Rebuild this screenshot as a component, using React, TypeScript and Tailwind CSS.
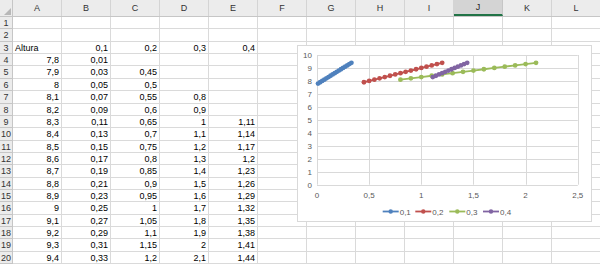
import React from 'react';

const COLS = ['A', 'B', 'C', 'D', 'E', 'F', 'G', 'H', 'I', 'J', 'K', 'L'];

const fmt = (n: number) => String(Math.round(n * 100) / 100).replace('.', ',');

// columns A..E of the sheet, keyed by first row and step
function buildRows(): string[][] {
  const rows: string[][] = [];
  for (let r = 1; r <= 20; r++) {
    const cells = COLS.map(() => '');
    if (r === 3) {
      cells[0] = 'Altura';
      cells[1] = '0,1';
      cells[2] = '0,2';
      cells[3] = '0,3';
      cells[4] = '0,4';
    }
    if (r >= 4) {
      cells[0] = fmt(7.8 + (r - 4) * 0.1);
      cells[1] = fmt(0.01 + (r - 4) * 0.02);
    }
    if (r >= 5) cells[2] = fmt(0.45 + (r - 5) * 0.05);
    if (r >= 7) cells[3] = fmt(0.8 + (r - 7) * 0.1);
    if (r >= 9) cells[4] = fmt(1.11 + (r - 9) * 0.03);
    rows.push(cells);
  }
  return rows;
}

const series = [
  { name: '0,1', color: '#4f81bd', x0: 0.01, dx: 0.02, y0: 7.8, n: 17 },
  { name: '0,2', color: '#c0504d', x0: 0.45, dx: 0.05, y0: 7.9, n: 16 },
  { name: '0,3', color: '#9bbb59', x0: 0.8, dx: 0.1, y0: 8.1, n: 14 },
  { name: '0,4', color: '#8064a2', x0: 1.11, dx: 0.03, y0: 8.3, n: 12 },
];

const PX = (x: number) => 19 + x * 104.3;
const PY = (y: number) => 138.7 - y * 12.97;

function Chart() {
  const legendX = [84.7, 117.3, 151.3, 185];
  return (
    <div className="absolute left-[297px] top-[45px] w-[295px] h-[177px] bg-white border border-[#d9d9d9]">
      <svg width="293" height="175" className="block">
        {Array.from({ length: 11 }, (_, i) => (
          <line key={'h' + i} x1={PX(0)} x2={PX(2.5)} y1={Math.round(PY(i)) + 0.5} y2={Math.round(PY(i)) + 0.5} stroke="#d9d9d9" strokeWidth="1" />
        ))}
        {Array.from({ length: 6 }, (_, i) => (
          <line key={'v' + i} x1={Math.round(PX(i * 0.5)) + 0.5} x2={Math.round(PX(i * 0.5)) + 0.5} y1={PY(10)} y2={PY(0)} stroke="#d9d9d9" strokeWidth="1" />
        ))}
        {Array.from({ length: 11 }, (_, i) => (
          <text key={'yl' + i} x="14" y={PY(i) + 3} textAnchor="end" fontSize="8" fill="#595959" fontFamily="Liberation Sans, Arial, sans-serif">
            {i}
          </text>
        ))}
        {Array.from({ length: 6 }, (_, i) => (
          <text key={'xl' + i} x={PX(i * 0.5)} y="152" textAnchor="middle" fontSize="8" fill="#595959" fontFamily="Liberation Sans, Arial, sans-serif">
            {fmt(i * 0.5)}
          </text>
        ))}
        {series.map((s) => {
          const pts = Array.from({ length: s.n }, (_, k) => [PX(s.x0 + k * s.dx), PY(s.y0 + k * 0.1)]);
          return (
            <g key={s.name}>
              <polyline points={pts.map((p) => p.join(',')).join(' ')} fill="none" stroke={s.color} strokeWidth="1.8" />
              {pts.map((p, k) => (
                <circle key={k} cx={p[0]} cy={p[1]} r="2.4" fill={s.color} />
              ))}
            </g>
          );
        })}
        {series.map((s, i) => (
          <g key={'lg' + s.name}>
            <line x1={legendX[i]} x2={legendX[i] + 16} y1="165.5" y2="165.5" stroke={s.color} strokeWidth="1.8" />
            <circle cx={legendX[i] + 8} cy="165.5" r="2.2" fill={s.color} />
            <text x={legendX[i] + 17} y="168.5" fontSize="8" fill="#595959" fontFamily="Liberation Sans, Arial, sans-serif">
              {s.name}
            </text>
          </g>
        ))}
      </svg>
    </div>
  );
}

export default function App() {
  const rows = buildRows();
  return (
    <div className="relative w-[600px] h-[264px] overflow-hidden bg-white font-['Liberation_Sans',Arial,sans-serif] text-[9px] text-black">
      {/* column headers */}
      <div className="flex h-[17px] bg-[#ececec] border-b border-[#c6c6c6]">
        <div className="relative w-[13px] shrink-0 border-r border-[#c6c6c6]">
          <div className="absolute right-[1px] bottom-[1px] w-0 h-0 border-l-[7px] border-l-transparent border-b-[7px] border-b-[#b8b8b8]" />
        </div>
        {COLS.map((c) => (
          <div
            key={c}
            className={
              c === 'J'
                ? 'w-[49px] shrink-0 flex items-center justify-center pt-[2px] bg-[#d4d4d4] border-r border-[#c6c6c6] border-b-2 border-b-[#217346] text-[#262626]'
                : 'w-[49px] shrink-0 flex items-center justify-center pt-[2px] border-r border-[#d4d4d4] text-[#333]'
            }
          >
            {c}
          </div>
        ))}
      </div>
      {rows.map((cells, i) => (
        <div key={i} className="flex h-[12.37px] leading-[12px]">
          <div className="w-[13px] shrink-0 bg-[#ececec] border-r border-b border-[#c6c6c6] text-[#333] text-center">{i + 1}</div>
          {cells.map((v, j) => (
            <div
              key={j}
              className={
                i === 2 && j === 0
                  ? 'w-[49px] shrink-0 border-r border-b border-[#dadada] px-[2px] text-left whitespace-nowrap'
                  : 'w-[49px] shrink-0 border-r border-b border-[#dadada] px-[2px] text-right whitespace-nowrap'
              }
            >
              {v}
            </div>
          ))}
        </div>
      ))}
      <Chart />
    </div>
  );
}
